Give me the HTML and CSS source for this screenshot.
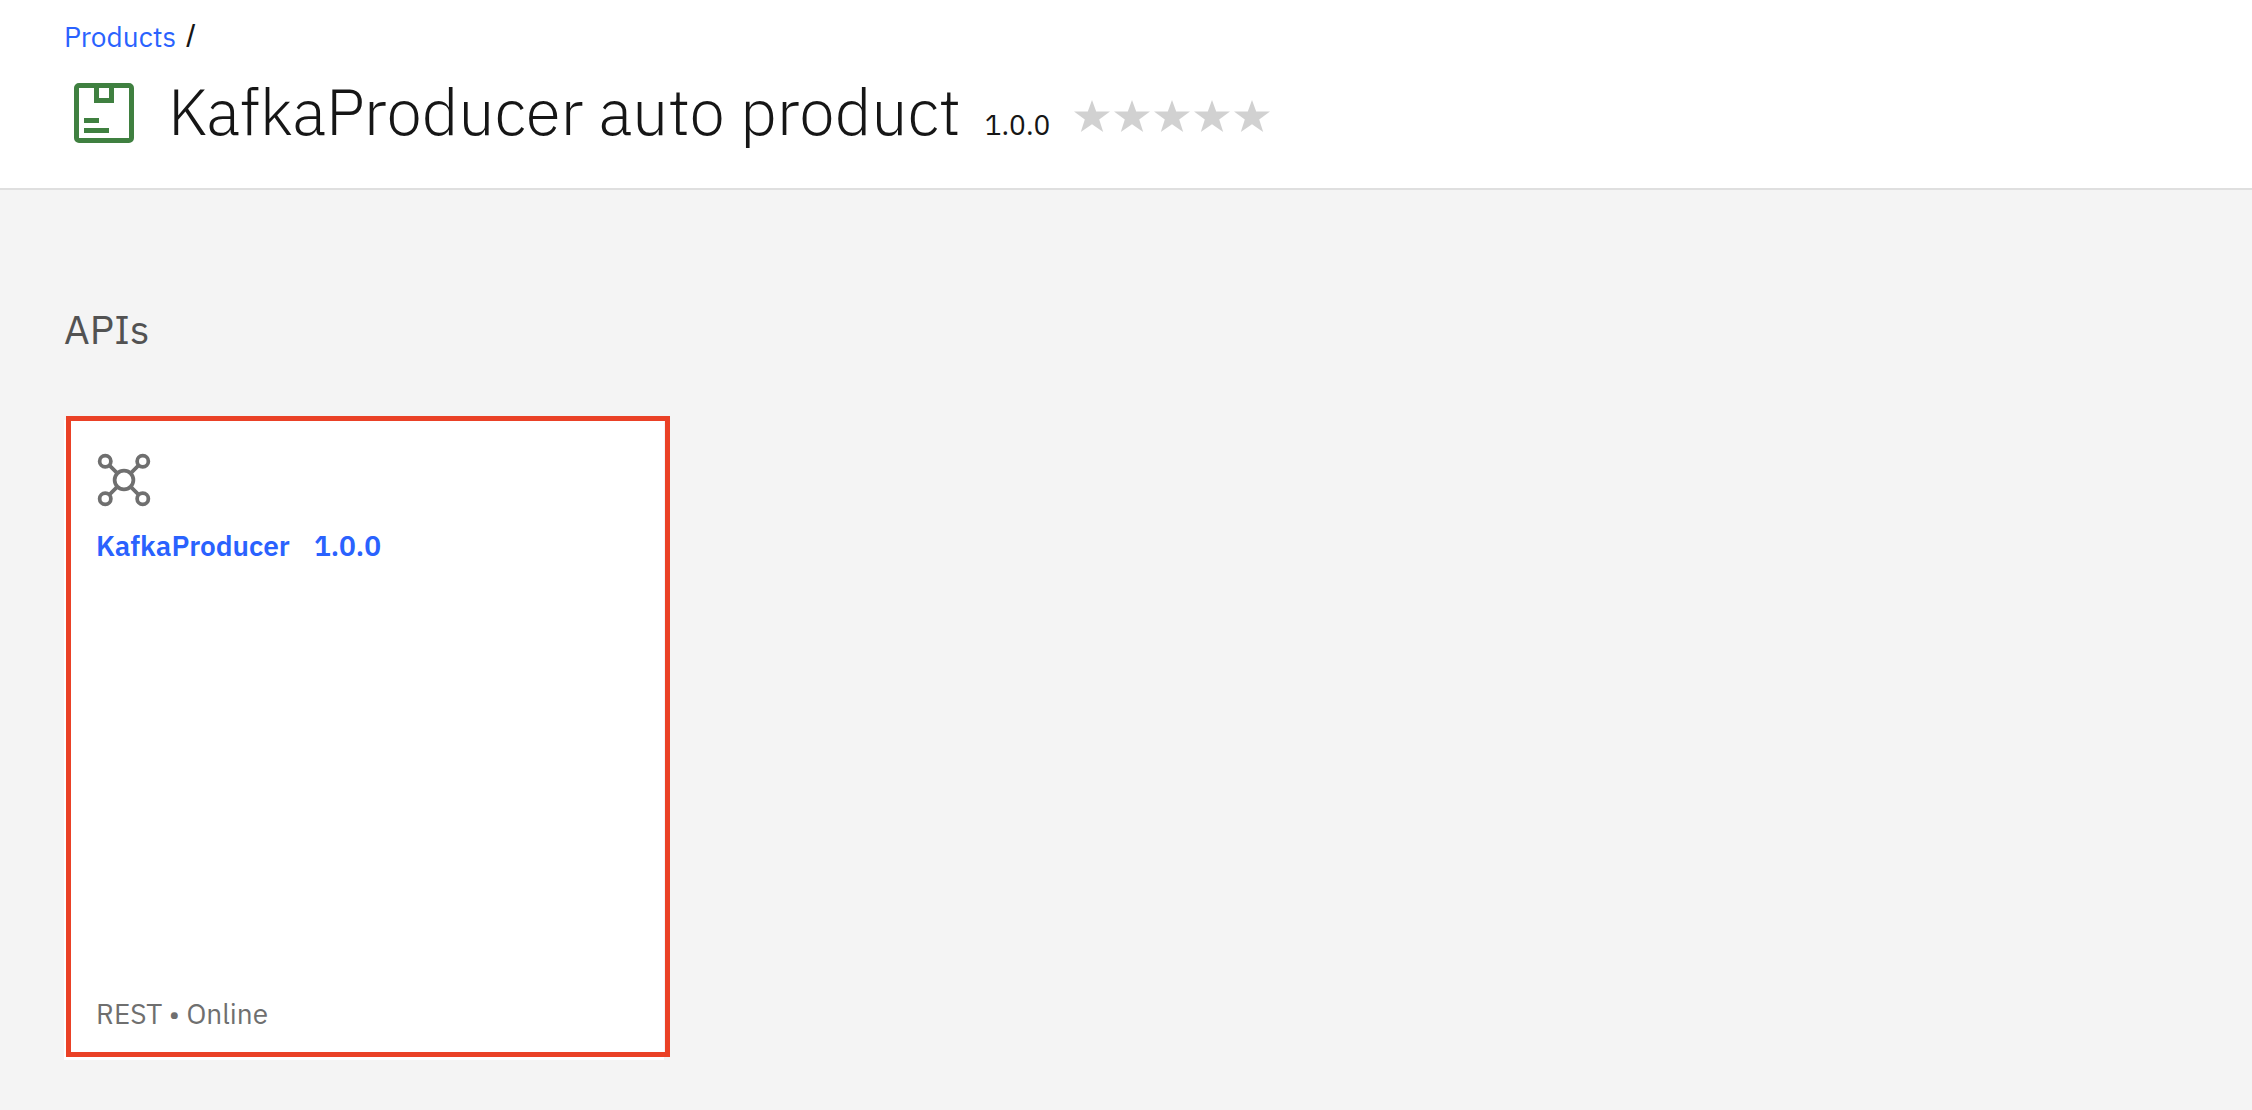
FILE: index.html
```html
<!DOCTYPE html>
<html lang="en">
<head>
<meta charset="utf-8">
<meta name="viewport" content="width=device-width, initial-scale=1">
<title>KafkaProducer auto product</title>
<link rel="stylesheet" href="styles.css">
</head>
<body>
<header class="page-header">
  <nav class="breadcrumb" aria-label="Breadcrumb">
    <a href="#products">Products</a>
    <span class="slash">/</span>
  </nav>
  <div class="product">
    <svg class="product-icon" viewBox="0 0 32 32" aria-hidden="true">
      <rect x="5" y="5" width="22" height="22" rx="1"/>
      <path d="M13 5v6h6V5M8 19h6M8 23h10"/>
    </svg>
    <h1 class="product-name">KafkaProducer auto product</h1>
    <span class="product-version">1.0.0</span>
    <div class="rating" role="img" aria-label="Not rated">
      <svg viewBox="0 0 36 32"><path d="M18 0l4.2 11.5H36L25.2 19.4 29.2 32 18 24.2 6.8 32l4-12.6L0 11.5h13.8z"/></svg>
      <svg viewBox="0 0 36 32"><path d="M18 0l4.2 11.5H36L25.2 19.4 29.2 32 18 24.2 6.8 32l4-12.6L0 11.5h13.8z"/></svg>
      <svg viewBox="0 0 36 32"><path d="M18 0l4.2 11.5H36L25.2 19.4 29.2 32 18 24.2 6.8 32l4-12.6L0 11.5h13.8z"/></svg>
      <svg viewBox="0 0 36 32"><path d="M18 0l4.2 11.5H36L25.2 19.4 29.2 32 18 24.2 6.8 32l4-12.6L0 11.5h13.8z"/></svg>
      <svg viewBox="0 0 36 32"><path d="M18 0l4.2 11.5H36L25.2 19.4 29.2 32 18 24.2 6.8 32l4-12.6L0 11.5h13.8z"/></svg>
    </div>
  </div>
</header>
<main class="content">
  <h2 class="section-title">APIs</h2>
  <div class="cards">
    <article class="card">
      <svg class="api-icon" viewBox="0 0 32 32" aria-hidden="true">
        <circle cx="16" cy="16" r="5"/>
        <circle cx="6" cy="6" r="3"/><circle cx="26" cy="6" r="3"/>
        <circle cx="6" cy="26" r="3"/><circle cx="26" cy="26" r="3"/>
        <path d="M8.1 8.1l4.4 4.4M23.9 8.1l-4.4 4.4M8.1 23.9l4.4-4.4M23.9 23.9l-4.4-4.4"/>
      </svg>
      <a class="card-link" href="#kafkaproducer"><span>KafkaProducer</span><span>1.0.0</span></a>
      <p class="card-status">REST • Online</p>
    </article>
  </div>
</main>
</body>
</html>
```
FILE: styles.css
```css
* {
  box-sizing: border-box;
}

body {
  margin: 0;
  min-height: 100vh;
  background: #f4f4f4;
  color: #161616;
  font-family: "IBM Plex Sans", Roboto, sans-serif;
  font-size: 28px;
  line-height: 36px;
}

a {
  color: #2a62fe;
  text-decoration: none;
}

.page-header {
  padding: 18px 64px 35px;
  background: #fff;
  border-bottom: 2px solid #dfdfdf;
}

.breadcrumb {
  display: flex;
  align-items: baseline;
  gap: 10px;
  height: 36px;
}

.slash {
  font-family: "Liberation Sans", Arial, sans-serif;
  font-size: 32px;
}

.product {
  display: flex;
  align-items: flex-start;
  margin-top: 19px;
}

.product-icon {
  width: 80px;
  height: 80px;
  margin-right: 24px;
  fill: none;
  stroke: #3f8040;
  stroke-width: 2;
}

.product-name {
  margin: 0;
  font-size: 64px;
  line-height: 76px;
  font-weight: 300;
}

.product-version {
  margin-left: 24px;
  padding-top: 34px;
}

.rating {
  display: flex;
  gap: 4px;
  margin-left: 24px;
  padding-top: 27px;
}

.rating svg {
  width: 36px;
  height: 32px;
  fill: #d1d1d1;
}

.content {
  padding: 115px 64px 50px;
}

.section-title {
  margin: 0;
  color: #525252;
  font-size: 40px;
  line-height: 48px;
  font-weight: 400;
}

.cards {
  display: grid;
  grid-template-columns: repeat(auto-fill, 600px);
  margin-top: 67px;
}

.card {
  position: relative;
  display: flex;
  flex-direction: column;
  align-items: flex-start;
  min-height: 640px;
  padding: 30px 32px 28px;
  background: #fff;
}

/* Highlight frame over the card */
.card::after {
  content: "";
  position: absolute;
  inset: -4px -6px 3px 2px;
  border: 5px solid #ea4126;
  pointer-events: none;
}

.api-icon {
  width: 60px;
  height: 60px;
  margin-left: -2px;
  fill: none;
  stroke: #6f6f6f;
  stroke-width: 2;
}

.card-link {
  display: flex;
  gap: 24px;
  margin-top: 18px;
  font-weight: 600;
}

.card-status {
  margin: auto 0 0;
  color: #6f6f6f;
}
```
